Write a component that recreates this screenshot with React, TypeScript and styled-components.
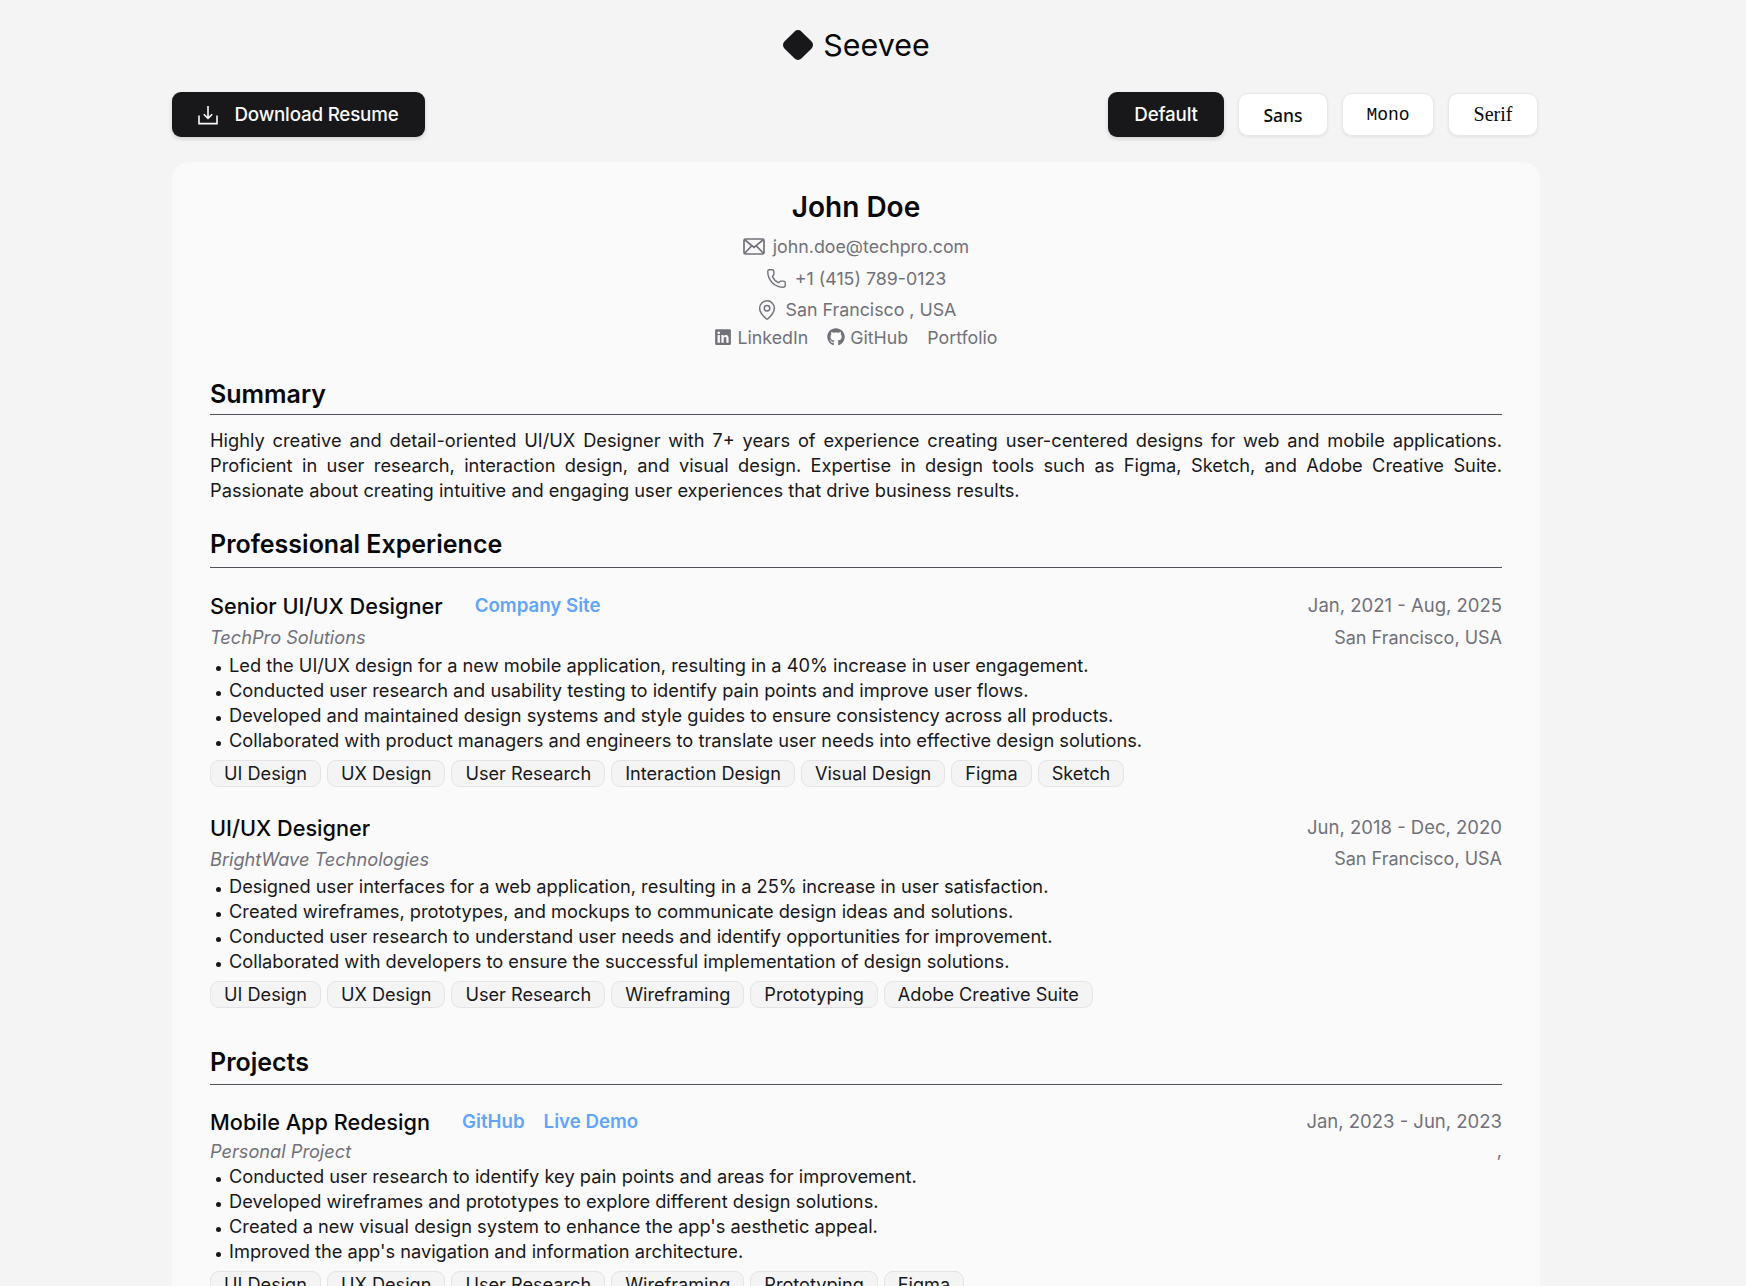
import React from "react";
import styled, { createGlobalStyle } from "styled-components";
import { Phone, MapPin } from "lucide-react";
import { FaGithub, FaLinkedin } from "react-icons/fa";

const Global = createGlobalStyle`
  html, body { margin: 0; padding: 0; height: 1286px; overflow: hidden; background: #f4f4f5; }
  * { box-sizing: border-box; }
  body { font-family: Inter, "Liberation Sans", sans-serif; color: #09090b; }
`;

const Page = styled.div`
  width: 1368px;
  margin: 0 0 0 172px;
  padding: 27px 0 0 0;
`;
const Brand = styled.header`
  display: flex;
  justify-content: center;
  align-items: center;
  gap: 9px;
  height: 36px;
  font-size: 30.4px;
  color: #09090b;
`;
const Toolbar = styled.div`
  display: flex;
  justify-content: space-between;
  align-items: center;
  margin-top: 29px;
`;
const FontGroup = styled.div`
  display: flex;
  align-items: center;
  gap: 14px;
  padding-right: 2px;
`;
const DarkButton = styled.button<{ $w: number }>`
  display: flex;
  align-items: center;
  justify-content: center;
  gap: 16px;
  height: 45px;
  padding: 0;
  width: ${(p) => p.$w}px;
  border: none;
  border-radius: 9px;
  background: #18181b;
  color: #fafafa;
  font: 500 18.8px Inter, sans-serif;
  letter-spacing: -0.2px;
  box-shadow: 0 2px 4px rgba(0, 0, 0, 0.15);
`;
const LightButton = styled.button<{ $w: number; $font: string; $weight: number; $size: number }>`
  height: 43px;
  width: ${(p) => p.$w}px;
  border: 1px solid #e8e8ea;
  border-radius: 10px;
  background: #fff;
  color: #09090b;
  font-family: ${(p) => p.$font};
  font-weight: ${(p) => p.$weight};
  font-size: ${(p) => p.$size}px;
  box-shadow: 0 1px 3px rgba(0, 0, 0, 0.08);
`;
const Card = styled.main`
  margin-top: 25px;
  padding: 26px 38px 40px;
  background: #fafafa;
  border-radius: 18px;
  font-size: 18.25px;
  line-height: 25px;
`;
const Head = styled.div`
  display: flex;
  flex-direction: column;
  align-items: center;
  color: #71717a;
`;
const Name = styled.h1`
  margin: 0 0 5px;
  font-size: 28px;
  line-height: 38px;
  font-weight: 600;
  color: #09090b;
`;
const Contact = styled.div`
  display: flex;
  align-items: center;
  gap: 8px;
  height: 31.5px;
  font-size: 17.8px;
`;
const Links = styled.div`
  display: flex;
  align-items: center;
  gap: 19px;
  height: 25px;
  margin-top: -1px;
  font-size: 17.8px;
`;
const LinkItem = styled.span`
  display: flex;
  align-items: center;
  gap: 5px;
`;
const SectionTitle = styled.h2<{ $top: number; $pad: number }>`
  margin: ${(p) => p.$top}px 0 0;
  padding-bottom: ${(p) => p.$pad}px;
  border-bottom: 1px solid #52525b;
  font-size: 25px;
  line-height: 34px;
  font-weight: 600;
  color: #09090b;
`;
const Summary = styled.p`
  margin: 13px 0 0;
  text-align: justify;
  color: #18181b;
`;
const Entry = styled.article<{ $top: number }>`
  margin-top: ${(p) => p.$top}px;
`;
const EntryRow = styled.div`
  display: flex;
  justify-content: space-between;
  align-items: center;
`;
const TitleGroup = styled.div`
  display: flex;
  align-items: center;
`;
const RoleTitle = styled.h3`
  margin: 0;
  font-size: 21.7px;
  line-height: 32px;
  font-weight: 500;
  color: #09090b;
`;
const BlueLink = styled.a<{ $left: number }>`
  margin-left: ${(p) => p.$left}px;
  color: #60a5fa;
  font-weight: 600;
  font-size: 18.7px;
`;
const Meta = styled.span<{ $size: number }>`
  color: #71717a;
  font-size: ${(p) => p.$size}px;
`;
const Company = styled.em<{ $h: number }>`
  color: #71717a;
  font-size: 18.2px;
  line-height: ${(p) => p.$h}px;
`;
const SubRow = styled(EntryRow)<{ $h: number }>`
  height: ${(p) => p.$h}px;
`;
const Bullets = styled.ul`
  list-style: none;
  margin: 0;
  padding: 0;
  color: #18181b;
`;
const Bullet = styled.li`
  position: relative;
  padding-left: 19px;
  line-height: 25px;
  &::before {
    content: "";
    position: absolute;
    left: 6px;
    top: 13px;
    width: 5px;
    height: 5px;
    border-radius: 50%;
    background: #18181b;
  }
`;
const Tags = styled.div`
  display: flex;
  gap: 6px;
  margin-top: 7px;
`;
const Tag = styled.span`
  height: 27px;
  padding: 0 13px;
  display: flex;
  align-items: center;
  border: 1px solid #e4e4e7;
  border-radius: 9px;
  background: #f4f4f5;
  font-size: 18.15px;
  color: #18181b;
`;

const LogoMark = () => (
  <svg width="32" height="32" viewBox="0 0 32 32">
    <path d="M12.6 2.4a4.8 4.8 0 0 1 6.8 0L29.6 12.6a4.8 4.8 0 0 1 0 6.8L19.4 29.6a4.8 4.8 0 0 1-6.8 0L2.4 19.4a4.8 4.8 0 0 1 0-6.8z" fill="#18181b" />
  </svg>
);
const DownloadIcon = () => (
  <svg width="20" height="20" viewBox="0 0 20 20" fill="none" stroke="#fafafa" strokeWidth="1.6">
    <path d="M10 1v12M5.8 9.2 10 13.4l4.2-4.2" />
    <path d="M1 10.5V18.6h18v-8.1" />
  </svg>
);
const MailIcon = () => (
  <svg width="22" height="17" viewBox="0 0 22 17" fill="none" stroke="#71717a" strokeWidth="1.7">
    <rect x="1" y="1" width="20" height="15" rx="1.5" />
    <path d="M1.5 1.5 11 9.5l9.5-8M1.5 15.5l7-7.5M20.5 15.5l-7-7.5" />
  </svg>
);

type Job = {
  title: string;
  links: { label: string; left: number }[];
  company: string;
  date: string;
  place: string;
  points: string[];
  tags: string[];
  top: number;
  subH: number;
};

const jobs: Job[] = [
  {
    title: "Senior UI/UX Designer",
    links: [{ label: "Company Site", left: 32 }],
    company: "TechPro Solutions",
    date: "Jan, 2021 - Aug, 2025",
    place: "San Francisco, USA",
    top: 22,
    subH: 31,
    points: [
      "Led the UI/UX design for a new mobile application, resulting in a 40% increase in user engagement.",
      "Conducted user research and usability testing to identify pain points and improve user flows.",
      "Developed and maintained design systems and style guides to ensure consistency across all products.",
      "Collaborated with product managers and engineers to translate user needs into effective design solutions.",
    ],
    tags: ["UI Design", "UX Design", "User Research", "Interaction Design", "Visual Design", "Figma", "Sketch"],
  },
  {
    title: "UI/UX Designer",
    links: [],
    company: "BrightWave Technologies",
    date: "Jun, 2018 - Dec, 2020",
    place: "San Francisco, USA",
    top: 25,
    subH: 30,
    points: [
      "Designed user interfaces for a web application, resulting in a 25% increase in user satisfaction.",
      "Created wireframes, prototypes, and mockups to communicate design ideas and solutions.",
      "Conducted user research to understand user needs and identify opportunities for improvement.",
      "Collaborated with developers to ensure the successful implementation of design solutions.",
    ],
    tags: ["UI Design", "UX Design", "User Research", "Wireframing", "Prototyping", "Adobe Creative Suite"],
  },
];

const project: Job = {
  title: "Mobile App Redesign",
  links: [
    { label: "GitHub", left: 32 },
    { label: "Live Demo", left: 19 },
  ],
  company: "Personal Project",
  date: "Jan, 2023 - Jun, 2023",
  place: ",",
  top: 21,
  subH: 26,
  points: [
    "Conducted user research to identify key pain points and areas for improvement.",
    "Developed wireframes and prototypes to explore different design solutions.",
    "Created a new visual design system to enhance the app's aesthetic appeal.",
    "Improved the app's navigation and information architecture.",
  ],
  tags: ["UI Design", "UX Design", "User Research", "Wireframing", "Prototyping", "Figma"],
};

const EntryBlock = ({ job }: { job: Job }) => (
  <Entry $top={job.top}>
    <EntryRow>
      <TitleGroup>
        <RoleTitle>{job.title}</RoleTitle>
        {job.links.map((l) => (
          <BlueLink key={l.label} $left={l.left}>{l.label}</BlueLink>
        ))}
      </TitleGroup>
      <Meta $size={18.5}>{job.date}</Meta>
    </EntryRow>
    <SubRow $h={job.subH}>
      <Company $h={job.subH}>{job.company}</Company>
      <Meta $size={18}>{job.place}</Meta>
    </SubRow>
    <Bullets>
      {job.points.map((p) => (
        <Bullet key={p}>{p}</Bullet>
      ))}
    </Bullets>
    <Tags>
      {job.tags.map((t) => (
        <Tag key={t}>{t}</Tag>
      ))}
    </Tags>
  </Entry>
);

export default function App() {
  return (
    <Page>
      <Global />
      <Brand>
        <LogoMark />
        <span>Seevee</span>
      </Brand>
      <Toolbar>
        <DarkButton $w={253}>
          <DownloadIcon />
          Download Resume
        </DarkButton>
        <FontGroup>
          <DarkButton $w={116}>Default</DarkButton>
          <LightButton $w={90} $font={'"Noto Sans", sans-serif'} $weight={500} $size={17.5}>Sans</LightButton>
          <LightButton $w={92} $font={'"Liberation Mono", monospace'} $weight={400} $size={18}>Mono</LightButton>
          <LightButton $w={90} $font={'"Liberation Serif", serif'} $weight={400} $size={20}>Serif</LightButton>
        </FontGroup>
      </Toolbar>
      <Card>
        <Head>
          <Name>John Doe</Name>
          <Contact>
            <MailIcon />
            john.doe@techpro.com
          </Contact>
          <Contact>
            <Phone size={21} strokeWidth={1.6} />
            +1 (415) 789-0123
          </Contact>
          <Contact>
            <MapPin size={22} strokeWidth={1.6} />
            San Francisco , USA
          </Contact>
          <Links>
            <LinkItem>
              <FaLinkedin size={18} />
              LinkedIn
            </LinkItem>
            <LinkItem>
              <FaGithub size={18} />
              GitHub
            </LinkItem>
            <LinkItem>Portfolio</LinkItem>
          </Links>
        </Head>
        <SectionTitle $top={27} $pad={3}>Summary</SectionTitle>
        <Summary>
          Highly creative and detail-oriented UI/UX Designer with 7+ years of experience creating user-centered designs for web and mobile applications. Proficient in user research, interaction design, and visual design. Expertise in design tools such as Figma, Sketch, and Adobe Creative Suite. Passionate about creating intuitive and engaging user experiences that drive business results.
        </Summary>
        <SectionTitle $top={24} $pad={6}>Professional Experience</SectionTitle>
        {jobs.map((j) => (
          <EntryBlock key={j.title} job={j} />
        ))}
        <SectionTitle $top={37} $pad={5}>Projects</SectionTitle>
        <EntryBlock job={project} />
      </Card>
    </Page>
  );
}
